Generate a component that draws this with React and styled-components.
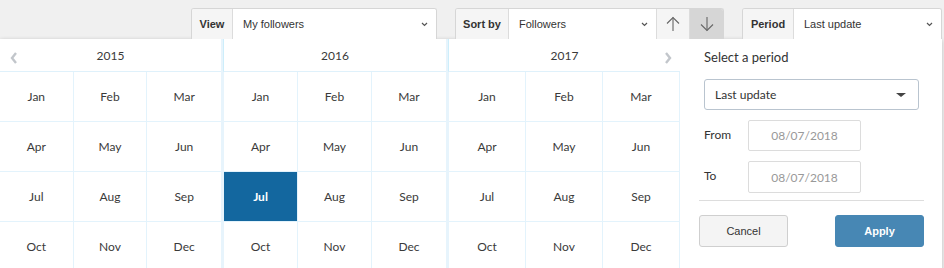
import React from 'react';
import styled, { createGlobalStyle } from 'styled-components';

const GlobalStyle = createGlobalStyle`
  html, body {
    margin: 0;
    padding: 0;
    background: #ffffff;
  }
  body {
    font-family: 'Liberation Sans', Arial, sans-serif;
    color: #333;
  }
`;

const Page = styled.div`
  width: 944px;
  height: 268px;
  overflow: hidden;
  background: #f0f0f0;
`;

const TopBar = styled.div`
  display: flex;
  justify-content: flex-end;
  gap: 18px;
  height: 39px;
  padding: 8px 2px 0 0;
  box-sizing: border-box;
`;

const Group = styled.div`
  display: flex;
  height: 31px;
  box-sizing: border-box;
  border: 1px solid #d6d6d6;
  border-bottom: none;
  border-radius: 3px 3px 0 0;
  background: #fff;
  overflow: hidden;
`;

const GroupLabel = styled.div`
  display: flex;
  align-items: center;
  justify-content: center;
  width: ${(p) => p.$w}px;
  box-sizing: border-box;
  background: #f5f5f5;
  border-right: 1px solid #dcdcdc;
  font-size: 11px;
  font-weight: bold;
  color: #333;
`;

const Select = styled.div`
  display: flex;
  align-items: center;
  justify-content: space-between;
  width: ${(p) => p.$w}px;
  padding: 0 8px 0 10px;
  box-sizing: border-box;
  font-size: 11px;
  color: #333;
  background: #fff;
`;

const SortButton = styled.div`
  display: flex;
  align-items: center;
  justify-content: center;
  width: ${(p) => p.$w}px;
  box-sizing: border-box;
  background: ${(p) => (p.$active ? '#d6d6d6' : '#f5f5f5')};
  border-left: 1px solid #dcdcdc;
`;

const Panel = styled.div`
  display: flex;
  width: 942px;
  height: 240px;
  background: #fff;
  box-shadow: 0 1px 4px rgba(0, 0, 0, 0.22);
  border-radius: 0 0 3px 3px;
`;

const Calendar = styled.div`
  display: flex;
  width: 680px;
  position: relative;
`;

const Year = styled.div`
  width: ${(p) => p.$w}px;
  display: flex;
  flex-direction: column;
  box-sizing: border-box;
  border-left: ${(p) => (p.$first ? 'none' : '3px solid #e7f4fc')};
`;

const YearHeader = styled.div`
  height: 33px;
  display: flex;
  align-items: center;
  justify-content: center;
  font-family: Lato, 'Open Sans', sans-serif;
  font-size: 12px;
  color: #3a3a3a;
  border-bottom: 1px solid #dff1fb;
  box-sizing: border-box;
  margin-left: ${(p) => (p.$first ? 0 : -1)}px;
  border-left: ${(p) => (p.$first ? 'none' : '1px solid #cdeefb')};
`;

const Months = styled.div`
  display: grid;
  grid-template-columns: repeat(3, 1fr);
  grid-auto-rows: 50px;
`;

const Month = styled.div`
  display: flex;
  align-items: center;
  justify-content: center;
  font-family: Lato, 'Open Sans', sans-serif;
  font-size: 12px;
  color: ${(p) => (p.$selected ? '#fff' : '#3a3a3a')};
  font-weight: ${(p) => (p.$selected ? 'bold' : 'normal')};
  background: ${(p) => (p.$selected ? '#13679f' : '#fff')};
  border-right: 1px solid #e3f3fc;
  border-bottom: 1px solid #e3f3fc;
  &:nth-child(3n) {
    border-right: ${(p) => (p.$last ? '1px solid #e3f3fc' : 'none')};
  }
`;

const NavArrow = styled.div`
  position: absolute;
  top: 12px;
  ${(p) => (p.$side === 'left' ? 'left: 9px;' : 'left: 663px;')}
  width: 10px;
  height: 14px;
`;

const Side = styled.div`
  flex: 1;
  padding: 10px 20px 0 19px;
  display: flex;
  flex-direction: column;
`;

const Form = styled.div`
  padding: 0 5px;
  font-family: Lato, 'Open Sans', sans-serif;
`;

const Title = styled.div`
  font-size: 13px;
  color: #333;
  line-height: 16px;
`;

const PeriodSelect = styled.div`
  margin-top: 14px;
  height: 31px;
  width: 215px;
  box-sizing: border-box;
  border: 1px solid #b9c4cf;
  border-radius: 3px;
  display: flex;
  align-items: center;
  justify-content: space-between;
  padding: 0 12px 0 10px;
  font-size: 12px;
  color: #333;
`;

const Caret = styled.span`
  width: 0;
  height: 0;
  border-left: 5px solid transparent;
  border-right: 5px solid transparent;
  border-top: 4px solid #444;
`;

const DateRow = styled.div`
  display: flex;
  align-items: center;
  margin-top: 10px;
`;

const DateLabel = styled.div`
  width: 44px;
  font-size: 12px;
  color: #333;
  margin-top: -3px;
`;

const DateInput = styled.div`
  width: 113px;
  height: ${(p) => p.$h}px;
  box-sizing: border-box;
  border: 1px solid #dcdcdc;
  border-radius: 2px;
  display: flex;
  align-items: center;
  justify-content: center;
  font-size: 12px;
  color: #999;
`;

const Divider = styled.div`
  margin-top: 7px;
  height: 1px;
  background: #dddddd;
`;

const Buttons = styled.div`
  display: flex;
  justify-content: space-between;
  margin-top: 14px;
`;

const Button = styled.div`
  width: 89px;
  height: 32px;
  box-sizing: border-box;
  display: flex;
  align-items: center;
  justify-content: center;
  border-radius: 3px;
  font-family: 'Liberation Sans', Arial, sans-serif;
  font-size: 11px;
  border: 1px solid ${(p) => (p.$primary ? '#4787b4' : '#cfcfcf')};
  background: ${(p) => (p.$primary ? '#4787b4' : '#f4f4f4')};
  color: ${(p) => (p.$primary ? '#fff' : '#333')};
  font-weight: ${(p) => (p.$primary ? 'bold' : 'normal')};
`;

const Chevron = () => (
  <svg width="7" height="5" viewBox="0 0 7 5">
    <polyline points="1,1 3.5,3.5 6,1" fill="none" stroke="#555" strokeWidth="1.2" />
  </svg>
);

const Arrow = ({ up }) => (
  <svg width="14" height="16" viewBox="0 0 14 16" style={up ? undefined : { transform: 'rotate(180deg)' }}>
    <line x1="7" y1="1.5" x2="7" y2="15" stroke="#666" strokeWidth="1.1" />
    <polyline points="1,7.5 7,1.5 13,7.5" fill="none" stroke="#666" strokeWidth="1.1" />
  </svg>
);

const NavIcon = ({ dir }) => (
  <svg width="10" height="14" viewBox="0 0 10 14">
    <polyline
      points={dir === 'left' ? '7,2 3,7 7,12' : '3,2 7,7 3,12'}
      fill="none"
      stroke="#c2c6cb"
      strokeWidth="2.4"
    />
  </svg>
);

const MONTHS = ['Jan', 'Feb', 'Mar', 'Apr', 'May', 'Jun', 'Jul', 'Aug', 'Sep', 'Oct', 'Nov', 'Dec'];
const YEARS = [
  { year: 2015, width: 221 },
  { year: 2016, width: 225 },
  { year: 2017, width: 234 },
];

function App() {
  return (
    <Page>
      <GlobalStyle />
      <TopBar>
        <Group>
          <GroupLabel $w={41}>View</GroupLabel>
          <Select $w={203}>
            My followers
            <Chevron />
          </Select>
        </Group>
        <Group>
          <GroupLabel $w={53}>Sort by</GroupLabel>
          <Select $w={147}>
            Followers
            <Chevron />
          </Select>
          <SortButton $w={33}>
            <Arrow up />
          </SortButton>
          <SortButton $w={34} $active>
            <Arrow />
          </SortButton>
        </Group>
        <Group>
          <GroupLabel $w={51}>Period</GroupLabel>
          <Select $w={147}>
            Last update
            <Chevron />
          </Select>
        </Group>
      </TopBar>
      <Panel>
        <Calendar>
          <NavArrow $side="left">
            <NavIcon dir="left" />
          </NavArrow>
          <NavArrow $side="right">
            <NavIcon dir="right" />
          </NavArrow>
          {YEARS.map((y, i) => (
            <Year key={y.year} $w={y.width} $first={i === 0}>
              <YearHeader $first={i === 0}>{y.year}</YearHeader>
              <Months>
                {MONTHS.map((m) => (
                  <Month key={m} $selected={y.year === 2016 && m === 'Jul'} $last={i === 2}>
                    {m}
                  </Month>
                ))}
              </Months>
            </Year>
          ))}
        </Calendar>
        <Side>
          <Form>
            <Title>Select a period</Title>
            <PeriodSelect>
              Last update
              <Caret />
            </PeriodSelect>
            <DateRow>
              <DateLabel>From</DateLabel>
              <DateInput $h={31}>08/07/2018</DateInput>
            </DateRow>
            <DateRow>
              <DateLabel>To</DateLabel>
              <DateInput $h={32}>08/07/2018</DateInput>
            </DateRow>
          </Form>
          <Divider />
          <Buttons>
            <Button>Cancel</Button>
            <Button $primary>Apply</Button>
          </Buttons>
        </Side>
      </Panel>
    </Page>
  );
}

export default App;
